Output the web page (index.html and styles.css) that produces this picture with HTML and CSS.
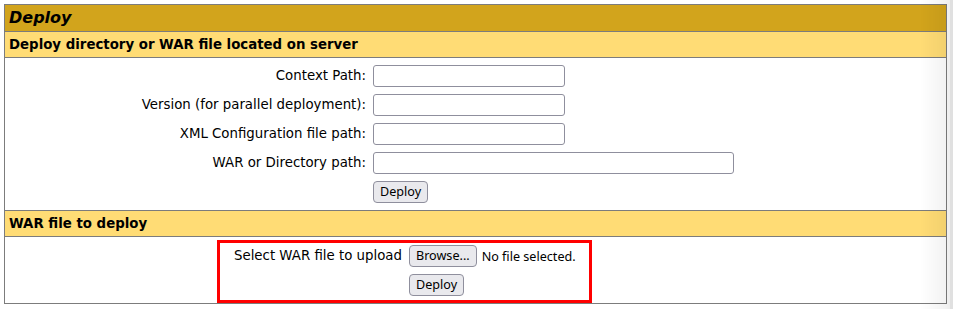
FILE: index.html
```
<!DOCTYPE html>
<html lang="en">
<head>
    <meta charset="UTF-8">
    <title>Tomcat Web Application Manager - Deploy</title>
    <link rel="stylesheet" href="styles.css">
</head>
<body>
    <div class="panel">
        <div class="title">Deploy</div>
        <div class="header-left">Deploy directory or WAR file located on server</div>

        <!-- deploy from server path -->
        <form class="server-form" onsubmit="return false;">
            <label class="row-right" for="deployPath">Context Path:</label>
            <input class="field" id="deployPath" type="text">

            <label class="row-right" for="deployVersion">Version (for parallel deployment):</label>
            <input class="field" id="deployVersion" type="text">

            <label class="row-right" for="deployConfig">XML Configuration file path:</label>
            <input class="field" id="deployConfig" type="text">

            <label class="row-right" for="deployWar">WAR or Directory path:</label>
            <input class="field field-wide" id="deployWar" type="text">

            <span></span>
            <button class="btn" type="submit">Deploy</button>
        </form>

        <div class="header-left">WAR file to deploy</div>

        <!-- upload a war -->
        <div class="upload-row">
            <form class="upload-form highlight" onsubmit="return false;">
                <span class="row-right">Select WAR file to upload</span>
                <div class="file-pick">
                    <button class="btn" type="button">Browse...</button>
                    <span class="file-name">No file selected.</span>
                </div>

                <span></span>
                <div><button class="btn" type="submit">Deploy</button></div>
            </form>
        </div>
    </div>
    <div class="edge-shade"></div>
</body>
</html>
```

FILE: styles.css
```
body {
    margin: 4px 6px 0 4px;
    background: #fff;
    color: #000;
    font-family: "DejaVu Sans", sans-serif;
}

.panel {
    border: 1px solid #7c7c7c;
}

.title {
    height: 26px;
    line-height: 26px;
    padding: 0 4px;
    background: #D2A41C;
    font-size: 16px;
    font-style: italic;
    font-weight: bold;
    border-bottom: 1px solid #7c7c7c;
}

.header-left {
    height: 25px;
    line-height: 26px;
    padding: 0 4px;
    background: #FFDC75;
    font-size: 13.33px;
    font-weight: bold;
    border-bottom: 1px solid #7c7c7c;
}

.server-form {
    display: grid;
    grid-template-columns: 361px auto;
    grid-auto-rows: 22px;
    column-gap: 7px;
    row-gap: 7px;
    align-items: center;
    justify-items: start;
    height: 153px;
    box-sizing: border-box;
    padding-top: 7px;
    margin: 0;
    border-bottom: 1px solid #7c7c7c;
}

.row-right {
    justify-self: end;
    font-size: 13.33px;
    line-height: 16px;
    white-space: nowrap;
}

.field {
    width: 192px;
    height: 22px;
    box-sizing: border-box;
    border: 1px solid #8f8f9d;
    border-radius: 3px;
    background: #fff;
    margin: 0;
    padding: 0 4px;
}

.field-wide {
    width: 361px;
}

.btn {
    display: block;
    height: 22px;
    box-sizing: border-box;
    padding: 0 6px;
    margin: 0;
    border: 1px solid #8f8f9d;
    border-radius: 4px;
    background: #e9e9ed;
    color: #000;
    font-family: "Noto Sans", sans-serif;
    font-size: 12.6px;
    line-height: 20px;
}

.upload-row {
    height: 66px;
    box-sizing: border-box;
    padding: 3px 0 0 212px;
}

.upload-form {
    display: grid;
    grid-template-columns: max-content max-content;
    grid-auto-rows: 22px;
    column-gap: 7px;
    row-gap: 7px;
    align-items: center;
    width: 375px;
    height: 63px;
    box-sizing: border-box;
    padding: 2px 0 0 14px;
    margin: 0;
}

.highlight {
    border: 3px solid #f00;
}

.file-pick {
    display: flex;
    align-items: center;
    gap: 5px;
}

.file-name {
    font-family: "Noto Sans", sans-serif;
    font-size: 12.6px;
    white-space: nowrap;
}

.edge-shade {
    position: fixed;
    top: 0;
    right: 0;
    bottom: 0;
    width: 33px;
    pointer-events: none;
    background: linear-gradient(to right, rgba(0, 0, 0, 0) 0, rgba(0, 0, 0, 0.05) 26px, rgba(0, 0, 0, 0.07) 30px, rgba(0, 0, 0, 0.12) 30px);
}
```
